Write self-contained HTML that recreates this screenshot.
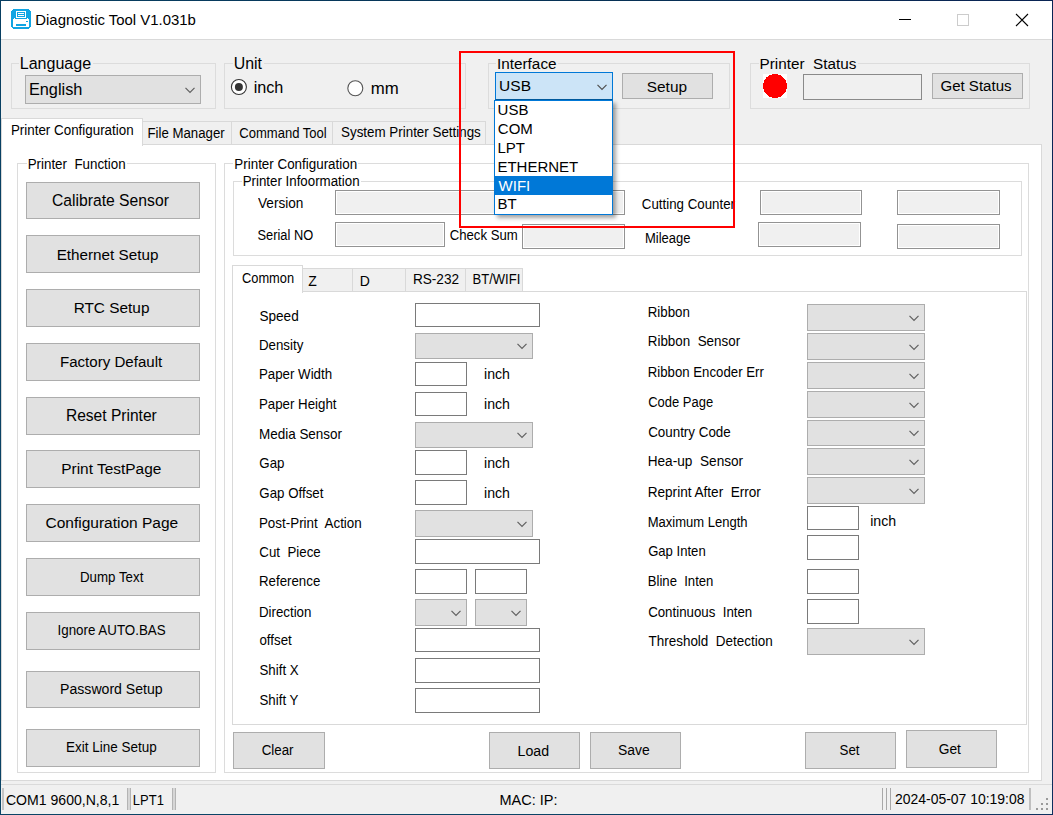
<!DOCTYPE html><html><head><meta charset="utf-8"><style>
html,body{margin:0;padding:0;}
body{width:1053px;height:815px;overflow:hidden;position:relative;background:#f0f0f0;font-family:"Liberation Sans",sans-serif;}
.a{position:absolute;}
.t{white-space:pre;color:#000;}
</style></head><body>
<div class="a" style="left:0px;top:0px;width:1053px;height:40px;background:#ffffff;box-sizing:border-box;"></div>
<div class="a" style="left:0px;top:39px;width:1053px;height:1px;background:#d9d9d9;box-sizing:border-box;"></div>
<svg class="a" style="left:11px;top:9px" width="20" height="20" shape-rendering="crispEdges">
<path d="M2 0H18V1H19V2H20V18H19V19H18V20H2V19H1V18H0V2H1V1H2Z" fill="#10a5e3"/>
<rect x="5" y="2" width="10" height="7" fill="#fff"/>
<rect x="6" y="3" width="8" height="5" fill="#10a5e3"/>
<rect x="7" y="4" width="6" height="1" fill="#fff"/>
<rect x="7" y="6" width="6" height="1" fill="#fff"/>
<rect x="2" y="10" width="16" height="8" fill="#fff"/>
<rect x="3" y="9" width="1" height="1" fill="#fff"/>
<rect x="16" y="9" width="1" height="1" fill="#fff"/>
<rect x="5" y="15" width="10" height="2" fill="#10a5e3"/>
<rect x="15" y="12" width="2" height="1" fill="#10a5e3"/>
</svg>
<div class="a t" style="left:35.31px;top:13.18px;font-size:14.91px;line-height:14.91px;color:#000;">Diagnostic Tool V1.031b</div>
<div class="a" style="left:899px;top:19px;width:12px;height:1px;background:#000;box-sizing:border-box;"></div>
<div class="a" style="left:957px;top:14px;width:12px;height:12px;border:1px solid #cccccc;box-sizing:border-box;"></div>
<svg class="a" style="left:1015px;top:13px" width="14" height="14"><path d="M1 1L13 13M13 1L1 13" stroke="#000" stroke-width="1.1"/></svg>
<div class="a" style="left:11px;top:63px;width:205px;height:46px;border:1px solid #dcdcdc;box-sizing:border-box;"></div>
<div class="a" style="left:19px;top:62px;width:73.6px;height:3px;background:#f0f0f0;box-sizing:border-box;"></div>
<div class="a t" style="left:19.71px;top:54.60px;font-size:16.06px;line-height:16.06px;color:#000;">Language</div>
<div class="a" style="left:25px;top:75px;width:176px;height:29px;background:#e1e1e1;border:1px solid #adadad;box-sizing:border-box;"></div>
<svg class="a" style="left:184px;top:85.9px" width="12" height="8"><path d="M1.5 1.8 L6 6.3 L10.5 1.8" fill="none" stroke="#606060" stroke-width="1.2"/></svg>
<div class="a t" style="left:28.89px;top:80.59px;font-size:16.32px;line-height:16.32px;color:#000;">English</div>
<div class="a" style="left:224px;top:63px;width:242px;height:46px;border:1px solid #dcdcdc;box-sizing:border-box;"></div>
<div class="a" style="left:232.8px;top:62px;width:31.19999999999999px;height:3px;background:#f0f0f0;box-sizing:border-box;"></div>
<div class="a t" style="left:233.69px;top:55.94px;font-size:15.90px;line-height:15.90px;color:#000;">Unit</div>
<svg class="a" style="left:230px;top:78px" width="18" height="18"><circle cx="8.9" cy="9" r="7.5" fill="#fff" stroke="#333" stroke-width="1.1"/><circle cx="8.9" cy="9" r="4" fill="#333"/></svg>
<div class="a t" style="left:253.63px;top:78.60px;font-size:16.18px;line-height:16.18px;color:#000;">inch</div>
<svg class="a" style="left:346px;top:79px" width="18" height="18"><circle cx="9.3" cy="9.25" r="7.5" fill="#fff" stroke="#555" stroke-width="1.1"/></svg>
<div class="a t" style="left:370.79px;top:80.59px;font-size:16.79px;line-height:16.79px;color:#000;">mm</div>
<div class="a" style="left:488px;top:63px;width:242px;height:46px;border:1px solid #dcdcdc;box-sizing:border-box;"></div>
<div class="a" style="left:496.4px;top:62px;width:61.60000000000002px;height:3px;background:#f0f0f0;box-sizing:border-box;"></div>
<div class="a t" style="left:497.02px;top:56.45px;font-size:15.30px;line-height:15.30px;color:#000;">Interface</div>
<div class="a" style="left:495px;top:72px;width:118px;height:28px;background:#cce4f7;border:1px solid #0078d7;box-sizing:border-box;border-bottom-color:#005a9e;"></div>
<div class="a t" style="left:499.11px;top:77.96px;font-size:15.52px;line-height:15.52px;color:#000;">USB</div>
<svg class="a" style="left:596px;top:82.5px" width="12" height="8"><path d="M1.5 1.8 L6 6.3 L10.5 1.8" fill="none" stroke="#505050" stroke-width="1.2"/></svg>
<div class="a" style="left:622px;top:73px;width:91px;height:26px;background:#e1e1e1;border:1px solid #adadad;box-sizing:border-box;"></div>
<div class="a t" style="left:646.78px;top:78.65px;font-size:15.41px;line-height:15.41px;color:#000;">Setup</div>
<div class="a" style="left:750px;top:63px;width:280px;height:46px;border:1px solid #dcdcdc;box-sizing:border-box;"></div>
<div class="a" style="left:758.8px;top:62px;width:99.10000000000002px;height:3px;background:#f0f0f0;box-sizing:border-box;"></div>
<div class="a t" style="left:759.58px;top:55.87px;font-size:15.27px;line-height:15.27px;color:#000;">Printer  Status</div>
<svg class="a" style="left:763px;top:74px" width="24" height="24" shape-rendering="crispEdges"><rect width="24" height="24" fill="#fff"/><circle cx="12" cy="12" r="12" fill="#ff0000"/></svg>
<div class="a" style="left:803px;top:74px;width:119px;height:26px;background:#f0f0f0;border:1px solid #8a8a8a;box-sizing:border-box;"></div>
<div class="a" style="left:932px;top:73px;width:91px;height:26px;background:#e1e1e1;border:1px solid #adadad;box-sizing:border-box;"></div>
<div class="a t" style="left:940.45px;top:78.36px;font-size:15.05px;line-height:15.05px;color:#000;">Get Status</div>
<div class="a" style="left:1px;top:144px;width:1041px;height:637px;background:#fff;border:1px solid #d9d9d9;box-sizing:border-box;"></div>
<div class="a" style="left:142px;top:121px;width:90px;height:24px;background:#f0f0f0;border:1px solid #d9d9d9;box-sizing:border-box;"></div>
<div class="a t" style="left:147.54px;top:126.60px;font-size:13.23px;line-height:13.23px;color:#000;transform:scaleY(1.08);transform-origin:0 11.20px;">File Manager</div>
<div class="a" style="left:231px;top:121px;width:102px;height:24px;background:#f0f0f0;border:1px solid #d9d9d9;box-sizing:border-box;"></div>
<div class="a t" style="left:239.25px;top:126.75px;font-size:13.05px;line-height:13.05px;color:#000;transform:scaleY(1.08);transform-origin:0 11.05px;">Command Tool</div>
<div class="a" style="left:332px;top:121px;width:154px;height:24px;background:#f0f0f0;border:1px solid #d9d9d9;box-sizing:border-box;"></div>
<div class="a t" style="left:341.06px;top:126.46px;font-size:13.39px;line-height:13.39px;color:#000;transform:scaleY(1.08);transform-origin:0 11.34px;">System Printer Settings</div>
<div class="a" style="left:1px;top:118px;width:142px;height:28px;background:#fff;box-sizing:border-box;border:1px solid #d9d9d9;border-bottom:none;"></div>
<div class="a t" style="left:10.93px;top:124.36px;font-size:13.39px;line-height:13.39px;color:#000;transform:scaleY(1.08);transform-origin:0 11.34px;">Printer Configuration</div>
<div class="a" style="left:17px;top:163px;width:199px;height:610px;border:1px solid #dcdcdc;box-sizing:border-box;"></div>
<div class="a" style="left:26.7px;top:162px;width:100.3px;height:3px;background:#fff;box-sizing:border-box;"></div>
<div class="a t" style="left:27.63px;top:157.78px;font-size:13.37px;line-height:13.37px;color:#000;transform:scaleY(1.08);transform-origin:0 11.32px;">Printer  Function</div>
<div class="a" style="left:26px;top:182px;width:174px;height:37px;background:#e1e1e1;border:1px solid #adadad;box-sizing:border-box;"></div>
<div class="a t" style="left:51.91px;top:192.50px;font-size:15.71px;line-height:15.71px;color:#000;">Calibrate Sensor</div>
<div class="a" style="left:26px;top:235px;width:174px;height:38px;background:#e1e1e1;border:1px solid #adadad;box-sizing:border-box;"></div>
<div class="a t" style="left:56.68px;top:246.79px;font-size:15.25px;line-height:15.25px;color:#000;">Ethernet Setup</div>
<div class="a" style="left:26px;top:289px;width:174px;height:38px;background:#e1e1e1;border:1px solid #adadad;box-sizing:border-box;"></div>
<div class="a t" style="left:73.67px;top:300.28px;font-size:15.38px;line-height:15.38px;color:#000;">RTC Setup</div>
<div class="a" style="left:26px;top:343px;width:174px;height:38px;background:#e1e1e1;border:1px solid #adadad;box-sizing:border-box;"></div>
<div class="a t" style="left:59.99px;top:353.83px;font-size:15.08px;line-height:15.08px;color:#000;">Factory Default</div>
<div class="a" style="left:26px;top:397px;width:174px;height:38px;background:#e1e1e1;border:1px solid #adadad;box-sizing:border-box;"></div>
<div class="a t" style="left:65.95px;top:407.62px;font-size:15.57px;line-height:15.57px;color:#000;">Reset Printer</div>
<div class="a" style="left:26px;top:450px;width:174px;height:38px;background:#e1e1e1;border:1px solid #adadad;box-sizing:border-box;"></div>
<div class="a t" style="left:61.26px;top:461.12px;font-size:15.45px;line-height:15.45px;color:#000;">Print TestPage</div>
<div class="a" style="left:26px;top:504px;width:174px;height:38px;background:#e1e1e1;border:1px solid #adadad;box-sizing:border-box;"></div>
<div class="a t" style="left:45.52px;top:514.68px;font-size:15.50px;line-height:15.50px;color:#000;">Configuration Page</div>
<div class="a" style="left:26px;top:558px;width:174px;height:38px;background:#e1e1e1;border:1px solid #adadad;box-sizing:border-box;"></div>
<div class="a t" style="left:80.03px;top:570.63px;font-size:13.31px;line-height:13.31px;color:#000;transform:scaleY(1.08);transform-origin:0 11.27px;">Dump Text</div>
<div class="a" style="left:26px;top:612px;width:174px;height:38px;background:#e1e1e1;border:1px solid #adadad;box-sizing:border-box;"></div>
<div class="a t" style="left:57.50px;top:623.88px;font-size:13.37px;line-height:13.37px;color:#000;transform:scaleY(1.08);transform-origin:0 11.32px;">Ignore AUTO.BAS</div>
<div class="a" style="left:26px;top:671px;width:174px;height:37px;background:#e1e1e1;border:1px solid #adadad;box-sizing:border-box;"></div>
<div class="a t" style="left:60.07px;top:682.27px;font-size:14.10px;line-height:14.10px;color:#000;transform:scaleY(1.08);transform-origin:0 11.93px;">Password Setup</div>
<div class="a" style="left:26px;top:729px;width:174px;height:38px;background:#e1e1e1;border:1px solid #adadad;box-sizing:border-box;"></div>
<div class="a t" style="left:66.12px;top:741.48px;font-size:13.49px;line-height:13.49px;color:#000;transform:scaleY(1.08);transform-origin:0 11.42px;">Exit Line Setup</div>
<div class="a" style="left:224px;top:163px;width:805px;height:610px;border:1px solid #dcdcdc;box-sizing:border-box;"></div>
<div class="a" style="left:233.4px;top:162px;width:125.1px;height:3px;background:#fff;box-sizing:border-box;"></div>
<div class="a t" style="left:234.33px;top:158.05px;font-size:13.40px;line-height:13.40px;color:#000;transform:scaleY(1.08);transform-origin:0 11.35px;">Printer Configuration</div>
<div class="a" style="left:233px;top:181px;width:789px;height:75px;border:1px solid #dcdcdc;box-sizing:border-box;"></div>
<div class="a" style="left:241.7px;top:180px;width:119.19999999999999px;height:3px;background:#fff;box-sizing:border-box;"></div>
<div class="a t" style="left:242.63px;top:175.42px;font-size:13.32px;line-height:13.32px;color:#000;transform:scaleY(1.08);transform-origin:0 11.28px;">Printer Infoormation</div>
<div class="a t" style="left:258.00px;top:196.59px;font-size:13.60px;line-height:13.60px;color:#000;transform:scaleY(1.08);transform-origin:0 11.51px;">Version</div>
<div class="a" style="left:335px;top:190px;width:290px;height:25px;background:#f0f0f0;border:1px solid #939393;box-sizing:border-box;box-shadow:inset 0 0 0 1px #fff;"></div>
<div class="a t" style="left:257.49px;top:229.72px;font-size:12.86px;line-height:12.86px;color:#000;transform:scaleY(1.08);transform-origin:0 10.88px;">Serial NO</div>
<div class="a" style="left:335px;top:222px;width:110px;height:25px;background:#f0f0f0;border:1px solid #939393;box-sizing:border-box;box-shadow:inset 0 0 0 1px #fff;"></div>
<div class="a t" style="left:449.74px;top:229.25px;font-size:13.17px;line-height:13.17px;color:#000;transform:scaleY(1.08);transform-origin:0 11.15px;">Check Sum</div>
<div class="a" style="left:522px;top:224px;width:103px;height:25px;background:#f0f0f0;border:1px solid #939393;box-sizing:border-box;box-shadow:inset 0 0 0 1px #fff;"></div>
<div class="a t" style="left:641.84px;top:197.64px;font-size:13.30px;line-height:13.30px;color:#000;transform:scaleY(1.08);transform-origin:0 11.26px;">Cutting Counter</div>
<div class="a" style="left:760px;top:190px;width:102px;height:25px;background:#f0f0f0;border:1px solid #939393;box-sizing:border-box;box-shadow:inset 0 0 0 1px #fff;"></div>
<div class="a" style="left:897px;top:190px;width:103px;height:25px;background:#f0f0f0;border:1px solid #939393;box-sizing:border-box;box-shadow:inset 0 0 0 1px #fff;"></div>
<div class="a t" style="left:644.96px;top:232.10px;font-size:13.00px;line-height:13.00px;color:#000;transform:scaleY(1.08);transform-origin:0 11.00px;">Mileage</div>
<div class="a" style="left:758px;top:222px;width:103px;height:25px;background:#f0f0f0;border:1px solid #939393;box-sizing:border-box;box-shadow:inset 0 0 0 1px #fff;"></div>
<div class="a" style="left:897px;top:224px;width:103px;height:25px;background:#f0f0f0;border:1px solid #939393;box-sizing:border-box;box-shadow:inset 0 0 0 1px #fff;"></div>
<div class="a" style="left:232px;top:291px;width:795px;height:434px;background:#fff;border:1px solid #d9d9d9;box-sizing:border-box;"></div>
<div class="a" style="left:302px;top:268px;width:51px;height:24px;background:#f0f0f0;border:1px solid #d9d9d9;box-sizing:border-box;"></div>
<div class="a t" style="left:308.18px;top:273.55px;font-size:14.00px;line-height:14.00px;color:#000;transform:scaleY(1.08);transform-origin:0 11.85px;">Z</div>
<div class="a" style="left:352px;top:268px;width:54px;height:24px;background:#f0f0f0;border:1px solid #d9d9d9;box-sizing:border-box;"></div>
<div class="a t" style="left:359.78px;top:273.55px;font-size:14.00px;line-height:14.00px;color:#000;transform:scaleY(1.08);transform-origin:0 11.85px;">D</div>
<div class="a" style="left:405px;top:268px;width:61px;height:24px;background:#f0f0f0;border:1px solid #d9d9d9;box-sizing:border-box;"></div>
<div class="a t" style="left:412.91px;top:272.89px;font-size:13.60px;line-height:13.60px;color:#000;transform:scaleY(1.08);transform-origin:0 11.51px;">RS-232</div>
<div class="a" style="left:465px;top:268px;width:58px;height:24px;background:#f0f0f0;border:1px solid #d9d9d9;box-sizing:border-box;"></div>
<div class="a t" style="left:472.56px;top:273.37px;font-size:13.04px;line-height:13.04px;color:#000;transform:scaleY(1.08);transform-origin:0 11.03px;">BT/WIFI</div>
<div class="a" style="left:232px;top:265px;width:71px;height:28px;background:#fff;box-sizing:border-box;border:1px solid #d9d9d9;border-bottom:none;"></div>
<div class="a t" style="left:241.96px;top:273.01px;font-size:12.86px;line-height:12.86px;color:#000;transform:scaleY(1.08);transform-origin:0 10.89px;">Common</div>
<div class="a t" style="left:259.46px;top:310.19px;font-size:13.59px;line-height:13.59px;color:#000;transform:scaleY(1.08);transform-origin:0 11.51px;">Speed</div>
<div class="a" style="left:415px;top:303px;width:125px;height:24px;background:#fff;border:1px solid #7a7a7a;box-sizing:border-box;"></div>
<div class="a t" style="left:258.94px;top:338.94px;font-size:13.30px;line-height:13.30px;color:#000;transform:scaleY(1.08);transform-origin:0 11.26px;">Density</div>
<div class="a" style="left:415px;top:333px;width:118px;height:26px;background:#e1e1e1;border:1px solid #adadad;box-sizing:border-box;"></div>
<svg class="a" style="left:516px;top:342.4px" width="12" height="8"><path d="M1.5 1.8 L6 6.3 L10.5 1.8" fill="none" stroke="#606060" stroke-width="1.2"/></svg>
<div class="a t" style="left:258.94px;top:367.84px;font-size:13.31px;line-height:13.31px;color:#000;transform:scaleY(1.08);transform-origin:0 11.26px;">Paper Width</div>
<div class="a" style="left:415px;top:362px;width:52px;height:24px;background:#fff;border:1px solid #7a7a7a;box-sizing:border-box;"></div>
<div class="a t" style="left:484.05px;top:367.13px;font-size:14.14px;line-height:14.14px;color:#000;transform:scaleY(1.08);transform-origin:0 11.97px;">inch</div>
<div class="a t" style="left:258.94px;top:397.64px;font-size:13.30px;line-height:13.30px;color:#000;transform:scaleY(1.08);transform-origin:0 11.26px;">Paper Height</div>
<div class="a" style="left:415px;top:392px;width:52px;height:24px;background:#fff;border:1px solid #7a7a7a;box-sizing:border-box;"></div>
<div class="a t" style="left:484.05px;top:396.93px;font-size:14.14px;line-height:14.14px;color:#000;transform:scaleY(1.08);transform-origin:0 11.97px;">inch</div>
<div class="a t" style="left:258.92px;top:427.88px;font-size:13.49px;line-height:13.49px;color:#000;transform:scaleY(1.08);transform-origin:0 11.42px;">Media Sensor</div>
<div class="a" style="left:415px;top:422px;width:118px;height:26px;background:#e1e1e1;border:1px solid #adadad;box-sizing:border-box;"></div>
<svg class="a" style="left:516px;top:431.4px" width="12" height="8"><path d="M1.5 1.8 L6 6.3 L10.5 1.8" fill="none" stroke="#606060" stroke-width="1.2"/></svg>
<div class="a t" style="left:259.33px;top:456.94px;font-size:13.30px;line-height:13.30px;color:#000;transform:scaleY(1.08);transform-origin:0 11.26px;">Gap</div>
<div class="a" style="left:415px;top:450px;width:52px;height:25px;background:#fff;border:1px solid #7a7a7a;box-sizing:border-box;"></div>
<div class="a t" style="left:484.05px;top:456.23px;font-size:14.14px;line-height:14.14px;color:#000;transform:scaleY(1.08);transform-origin:0 11.97px;">inch</div>
<div class="a t" style="left:259.33px;top:486.74px;font-size:13.30px;line-height:13.30px;color:#000;transform:scaleY(1.08);transform-origin:0 11.26px;">Gap Offset</div>
<div class="a" style="left:415px;top:480px;width:52px;height:25px;background:#fff;border:1px solid #7a7a7a;box-sizing:border-box;"></div>
<div class="a t" style="left:484.05px;top:486.03px;font-size:14.14px;line-height:14.14px;color:#000;transform:scaleY(1.08);transform-origin:0 11.97px;">inch</div>
<div class="a t" style="left:258.93px;top:516.74px;font-size:13.41px;line-height:13.41px;color:#000;transform:scaleY(1.08);transform-origin:0 11.36px;">Post-Print  Action</div>
<div class="a" style="left:415px;top:510px;width:118px;height:27px;background:#e1e1e1;border:1px solid #adadad;box-sizing:border-box;"></div>
<svg class="a" style="left:516px;top:519.9px" width="12" height="8"><path d="M1.5 1.8 L6 6.3 L10.5 1.8" fill="none" stroke="#606060" stroke-width="1.2"/></svg>
<div class="a t" style="left:259.33px;top:545.64px;font-size:13.30px;line-height:13.30px;color:#000;transform:scaleY(1.08);transform-origin:0 11.26px;">Cut  Piece</div>
<div class="a" style="left:415px;top:539px;width:125px;height:25px;background:#fff;border:1px solid #7a7a7a;box-sizing:border-box;"></div>
<div class="a t" style="left:258.94px;top:575.44px;font-size:13.30px;line-height:13.30px;color:#000;transform:scaleY(1.08);transform-origin:0 11.26px;">Reference</div>
<div class="a" style="left:415px;top:569px;width:52px;height:25px;background:#fff;border:1px solid #7a7a7a;box-sizing:border-box;"></div>
<div class="a" style="left:475px;top:569px;width:52px;height:25px;background:#fff;border:1px solid #7a7a7a;box-sizing:border-box;"></div>
<div class="a t" style="left:258.94px;top:605.84px;font-size:13.30px;line-height:13.30px;color:#000;transform:scaleY(1.08);transform-origin:0 11.26px;">Direction</div>
<div class="a" style="left:415px;top:599px;width:52px;height:27px;background:#e1e1e1;border:1px solid #adadad;box-sizing:border-box;"></div>
<svg class="a" style="left:450px;top:608.9px" width="12" height="8"><path d="M1.5 1.8 L6 6.3 L10.5 1.8" fill="none" stroke="#606060" stroke-width="1.2"/></svg>
<div class="a" style="left:475px;top:599px;width:52px;height:27px;background:#e1e1e1;border:1px solid #adadad;box-sizing:border-box;"></div>
<svg class="a" style="left:510px;top:608.9px" width="12" height="8"><path d="M1.5 1.8 L6 6.3 L10.5 1.8" fill="none" stroke="#606060" stroke-width="1.2"/></svg>
<div class="a t" style="left:259.47px;top:634.14px;font-size:13.30px;line-height:13.30px;color:#000;transform:scaleY(1.08);transform-origin:0 11.26px;">offset</div>
<div class="a" style="left:415px;top:628px;width:125px;height:24px;background:#fff;border:1px solid #7a7a7a;box-sizing:border-box;"></div>
<div class="a t" style="left:259.47px;top:664.44px;font-size:13.30px;line-height:13.30px;color:#000;transform:scaleY(1.08);transform-origin:0 11.26px;">Shift X</div>
<div class="a" style="left:415px;top:658px;width:125px;height:25px;background:#fff;border:1px solid #7a7a7a;box-sizing:border-box;"></div>
<div class="a t" style="left:259.47px;top:694.24px;font-size:13.30px;line-height:13.30px;color:#000;transform:scaleY(1.08);transform-origin:0 11.26px;">Shift Y</div>
<div class="a" style="left:415px;top:688px;width:125px;height:25px;background:#fff;border:1px solid #7a7a7a;box-sizing:border-box;"></div>
<div class="a t" style="left:647.74px;top:305.84px;font-size:13.30px;line-height:13.30px;color:#000;transform:scaleY(1.08);transform-origin:0 11.26px;">Ribbon</div>
<div class="a" style="left:807px;top:304px;width:118px;height:27px;background:#e1e1e1;border:1px solid #adadad;box-sizing:border-box;"></div>
<svg class="a" style="left:908px;top:313.9px" width="12" height="8"><path d="M1.5 1.8 L6 6.3 L10.5 1.8" fill="none" stroke="#606060" stroke-width="1.2"/></svg>
<div class="a t" style="left:647.73px;top:335.25px;font-size:13.41px;line-height:13.41px;color:#000;transform:scaleY(1.08);transform-origin:0 11.35px;">Ribbon  Sensor</div>
<div class="a" style="left:807px;top:333px;width:118px;height:27px;background:#e1e1e1;border:1px solid #adadad;box-sizing:border-box;"></div>
<svg class="a" style="left:908px;top:342.9px" width="12" height="8"><path d="M1.5 1.8 L6 6.3 L10.5 1.8" fill="none" stroke="#606060" stroke-width="1.2"/></svg>
<div class="a t" style="left:647.74px;top:365.81px;font-size:13.22px;line-height:13.22px;color:#000;transform:scaleY(1.08);transform-origin:0 11.19px;">Ribbon Encoder Err</div>
<div class="a" style="left:807px;top:362px;width:118px;height:27px;background:#e1e1e1;border:1px solid #adadad;box-sizing:border-box;"></div>
<svg class="a" style="left:908px;top:371.9px" width="12" height="8"><path d="M1.5 1.8 L6 6.3 L10.5 1.8" fill="none" stroke="#606060" stroke-width="1.2"/></svg>
<div class="a t" style="left:648.15px;top:395.80px;font-size:12.99px;line-height:12.99px;color:#000;transform:scaleY(1.08);transform-origin:0 11.00px;">Code Page</div>
<div class="a" style="left:807px;top:391px;width:118px;height:27px;background:#e1e1e1;border:1px solid #adadad;box-sizing:border-box;"></div>
<svg class="a" style="left:908px;top:400.9px" width="12" height="8"><path d="M1.5 1.8 L6 6.3 L10.5 1.8" fill="none" stroke="#606060" stroke-width="1.2"/></svg>
<div class="a t" style="left:648.13px;top:425.56px;font-size:13.40px;line-height:13.40px;color:#000;transform:scaleY(1.08);transform-origin:0 11.34px;">Country Code</div>
<div class="a" style="left:807px;top:420px;width:118px;height:26px;background:#e1e1e1;border:1px solid #adadad;box-sizing:border-box;"></div>
<svg class="a" style="left:908px;top:429.4px" width="12" height="8"><path d="M1.5 1.8 L6 6.3 L10.5 1.8" fill="none" stroke="#606060" stroke-width="1.2"/></svg>
<div class="a t" style="left:647.71px;top:455.16px;font-size:13.63px;line-height:13.63px;color:#000;transform:scaleY(1.08);transform-origin:0 11.54px;">Hea-up  Sensor</div>
<div class="a" style="left:807px;top:448px;width:118px;height:27px;background:#e1e1e1;border:1px solid #adadad;box-sizing:border-box;"></div>
<svg class="a" style="left:908px;top:457.9px" width="12" height="8"><path d="M1.5 1.8 L6 6.3 L10.5 1.8" fill="none" stroke="#606060" stroke-width="1.2"/></svg>
<div class="a t" style="left:647.71px;top:485.59px;font-size:13.59px;line-height:13.59px;color:#000;transform:scaleY(1.08);transform-origin:0 11.51px;">Reprint After  Error</div>
<div class="a" style="left:807px;top:477px;width:118px;height:27px;background:#e1e1e1;border:1px solid #adadad;box-sizing:border-box;"></div>
<svg class="a" style="left:908px;top:486.9px" width="12" height="8"><path d="M1.5 1.8 L6 6.3 L10.5 1.8" fill="none" stroke="#606060" stroke-width="1.2"/></svg>
<div class="a t" style="left:647.76px;top:515.57px;font-size:13.03px;line-height:13.03px;color:#000;transform:scaleY(1.08);transform-origin:0 11.03px;">Maximum Length</div>
<div class="a" style="left:807px;top:506px;width:52px;height:24px;background:#fff;border:1px solid #7a7a7a;box-sizing:border-box;"></div>
<div class="a t" style="left:870.15px;top:513.93px;font-size:14.14px;line-height:14.14px;color:#000;transform:scaleY(1.08);transform-origin:0 11.97px;">inch</div>
<div class="a t" style="left:648.14px;top:545.30px;font-size:13.11px;line-height:13.11px;color:#000;transform:scaleY(1.08);transform-origin:0 11.10px;">Gap Inten</div>
<div class="a" style="left:807px;top:535px;width:52px;height:25px;background:#fff;border:1px solid #7a7a7a;box-sizing:border-box;"></div>
<div class="a t" style="left:647.75px;top:575.39px;font-size:13.13px;line-height:13.13px;color:#000;transform:scaleY(1.08);transform-origin:0 11.11px;">Bline  Inten</div>
<div class="a" style="left:807px;top:569px;width:52px;height:25px;background:#fff;border:1px solid #7a7a7a;box-sizing:border-box;"></div>
<div class="a t" style="left:648.14px;top:605.65px;font-size:13.29px;line-height:13.29px;color:#000;transform:scaleY(1.08);transform-origin:0 11.25px;">Continuous  Inten</div>
<div class="a" style="left:807px;top:599px;width:52px;height:25px;background:#fff;border:1px solid #7a7a7a;box-sizing:border-box;"></div>
<div class="a t" style="left:648.53px;top:635.30px;font-size:13.46px;line-height:13.46px;color:#000;transform:scaleY(1.08);transform-origin:0 11.40px;">Threshold  Detection</div>
<div class="a" style="left:807px;top:628px;width:118px;height:27px;background:#e1e1e1;border:1px solid #adadad;box-sizing:border-box;"></div>
<svg class="a" style="left:908px;top:637.9px" width="12" height="8"><path d="M1.5 1.8 L6 6.3 L10.5 1.8" fill="none" stroke="#606060" stroke-width="1.2"/></svg>
<div class="a" style="left:233px;top:732px;width:92px;height:37px;background:#e1e1e1;border:1px solid #adadad;box-sizing:border-box;"></div>
<div class="a t" style="left:261.73px;top:744.42px;font-size:13.32px;line-height:13.32px;color:#000;transform:scaleY(1.08);transform-origin:0 11.28px;">Clear</div>
<div class="a" style="left:489px;top:732px;width:91px;height:37px;background:#e1e1e1;border:1px solid #adadad;box-sizing:border-box;"></div>
<div class="a t" style="left:517.57px;top:743.50px;font-size:14.17px;line-height:14.17px;color:#000;transform:scaleY(1.08);transform-origin:0 12.00px;">Load</div>
<div class="a" style="left:590px;top:732px;width:91px;height:37px;background:#e1e1e1;border:1px solid #adadad;box-sizing:border-box;"></div>
<div class="a t" style="left:617.94px;top:743.70px;font-size:13.93px;line-height:13.93px;color:#000;transform:scaleY(1.08);transform-origin:0 11.80px;">Save</div>
<div class="a" style="left:805px;top:732px;width:91px;height:37px;background:#e1e1e1;border:1px solid #adadad;box-sizing:border-box;"></div>
<div class="a t" style="left:839.57px;top:744.12px;font-size:13.33px;line-height:13.33px;color:#000;transform:scaleY(1.08);transform-origin:0 11.28px;">Set</div>
<div class="a" style="left:906px;top:730px;width:91px;height:38px;background:#e1e1e1;border:1px solid #adadad;box-sizing:border-box;"></div>
<div class="a t" style="left:938.71px;top:742.56px;font-size:13.75px;line-height:13.75px;color:#000;transform:scaleY(1.08);transform-origin:0 11.64px;">Get</div>
<div class="a" style="left:1px;top:784px;width:1051px;height:1px;background:#dadada;box-sizing:border-box;"></div>
<div class="a" style="left:2px;top:788px;width:2px;height:22px;background:#c4c4c4;box-sizing:border-box;"></div>
<div class="a t" style="left:5.90px;top:793.28px;font-size:14.08px;line-height:14.08px;color:#000;transform:scaleY(1.08);transform-origin:0 11.92px;">COM1 9600,N,8,1</div>
<div class="a" style="left:127px;top:788px;width:4px;height:22px;background:#d6d6d6;box-sizing:border-box;"></div>
<div class="a" style="left:127px;top:788px;width:1px;height:22px;background:#b4b4b4;box-sizing:border-box;"></div>
<div class="a" style="left:130px;top:788px;width:1px;height:22px;background:#b4b4b4;box-sizing:border-box;"></div>
<div class="a t" style="left:132.86px;top:794.21px;font-size:12.99px;line-height:12.99px;color:#000;transform:scaleY(1.08);transform-origin:0 10.99px;">LPT1</div>
<div class="a" style="left:172px;top:788px;width:4px;height:22px;background:#d6d6d6;box-sizing:border-box;"></div>
<div class="a" style="left:172px;top:788px;width:1px;height:22px;background:#b4b4b4;box-sizing:border-box;"></div>
<div class="a" style="left:175px;top:788px;width:1px;height:22px;background:#b4b4b4;box-sizing:border-box;"></div>
<div class="a t" style="left:499.44px;top:793.12px;font-size:14.51px;line-height:14.51px;color:#000;">MAC: IP:</div>
<div class="a" style="left:882px;top:788px;width:1px;height:22px;background:#a8a8a8;box-sizing:border-box;"></div>
<div class="a" style="left:886px;top:788px;width:1px;height:22px;background:#a8a8a8;box-sizing:border-box;"></div>
<div class="a" style="left:890px;top:788px;width:1px;height:22px;background:#a8a8a8;box-sizing:border-box;"></div>
<div class="a t" style="left:895.00px;top:792.89px;font-size:13.95px;line-height:13.95px;color:#000;transform:scaleY(1.08);transform-origin:0 11.81px;">2024-05-07 10:19:08</div>
<div class="a" style="left:1029px;top:788px;width:2px;height:22px;background:#c0c0c0;box-sizing:border-box;"></div>
<div class="a" style="left:1046px;top:798px;width:2px;height:2px;background:#9a9a9a;box-sizing:border-box;"></div>
<div class="a" style="left:1041px;top:803px;width:2px;height:2px;background:#9a9a9a;box-sizing:border-box;"></div>
<div class="a" style="left:1046px;top:803px;width:2px;height:2px;background:#9a9a9a;box-sizing:border-box;"></div>
<div class="a" style="left:1036px;top:808px;width:2px;height:2px;background:#9a9a9a;box-sizing:border-box;"></div>
<div class="a" style="left:1041px;top:808px;width:2px;height:2px;background:#9a9a9a;box-sizing:border-box;"></div>
<div class="a" style="left:1046px;top:808px;width:2px;height:2px;background:#9a9a9a;box-sizing:border-box;"></div>
<div class="a" style="left:494px;top:100px;width:119px;height:115px;box-shadow:3px 3px 4px rgba(0,0,0,0.35);"></div>
<div class="a" style="left:494px;top:100px;width:119px;height:115px;background:#fff;border:1px solid #0078d7;box-sizing:border-box;"></div>
<div class="a" style="left:495px;top:176px;width:117px;height:19px;background:#0078d7;box-sizing:border-box;"></div>
<div class="a t" style="left:497.55px;top:102.20px;font-size:15.00px;line-height:15.00px;color:#000;">USB</div>
<div class="a t" style="left:497.85px;top:121.10px;font-size:15.00px;line-height:15.00px;color:#000;">COM</div>
<div class="a t" style="left:497.40px;top:140.30px;font-size:15.00px;line-height:15.00px;color:#000;">LPT</div>
<div class="a t" style="left:497.40px;top:159.20px;font-size:15.00px;line-height:15.00px;color:#000;">ETHERNET</div>
<div class="a t" style="left:498.60px;top:177.80px;font-size:15.00px;line-height:15.00px;color:#fff;">WIFI</div>
<div class="a t" style="left:497.40px;top:196.40px;font-size:15.00px;line-height:15.00px;color:#000;">BT</div>
<div class="a" style="left:459px;top:51px;width:276px;height:177px;box-sizing:border-box;border:2px solid #ff0000;"></div>
<div class="a" style="left:0px;top:0px;width:1053px;height:1px;background:linear-gradient(90deg,#083f62,#063356 50%,#0a2454);box-sizing:border-box;"></div>
<div class="a" style="left:0px;top:0px;width:1px;height:815px;background:linear-gradient(#083f62,#0a4466);box-sizing:border-box;"></div>
<div class="a" style="left:1052px;top:0px;width:1px;height:815px;background:linear-gradient(#0a2454,#0e2f5e);box-sizing:border-box;"></div>
<div class="a" style="left:0px;top:814px;width:1053px;height:1px;background:linear-gradient(90deg,#0a4466,#0a4466 50%,#0e2f5e);box-sizing:border-box;"></div>
</body></html>
